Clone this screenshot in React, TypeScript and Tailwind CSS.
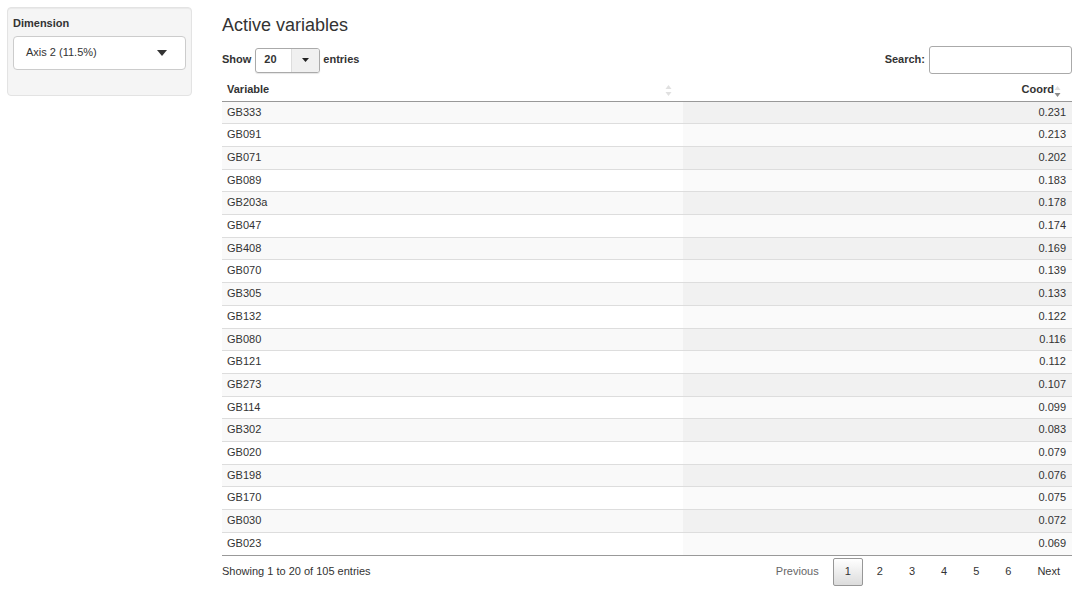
import React from "react";

const rows: [string, string][] = [
  ["GB333", "0.231"],
  ["GB091", "0.213"],
  ["GB071", "0.202"],
  ["GB089", "0.183"],
  ["GB203a", "0.178"],
  ["GB047", "0.174"],
  ["GB408", "0.169"],
  ["GB070", "0.139"],
  ["GB305", "0.133"],
  ["GB132", "0.122"],
  ["GB080", "0.116"],
  ["GB121", "0.112"],
  ["GB273", "0.107"],
  ["GB114", "0.099"],
  ["GB302", "0.083"],
  ["GB020", "0.079"],
  ["GB198", "0.076"],
  ["GB170", "0.075"],
  ["GB030", "0.072"],
  ["GB023", "0.069"],
];

function SortIcon({ active }: { active?: boolean }) {
  return (
    <svg width="7" height="13" viewBox="0 0 7 13" className="absolute right-[1px] top-[4px]">
      <path d="M3.5 1 L6.5 5 L0.5 5 Z" fill="#e0e0e0" />
      <path d="M3.5 12 L6.5 8 L0.5 8 Z" fill={active ? "#8a8a8a" : "#e0e0e0"} />
    </svg>
  );
}

export default function App() {
  return (
    <div className="flex w-[1080px] h-[596px] bg-white font-['Liberation_Sans',Arial,sans-serif] text-[#333] text-[11px] leading-[1.42857]">
      {/* Sidebar */}
      <div className="ml-[7px] mt-[7px] w-[185px] h-[89px] shrink-0 bg-[#f5f5f5] border border-[#e3e3e3] rounded-[4px] px-[5px] pt-[8px] shadow-[inset_0_1px_1px_rgba(0,0,0,0.05)]">
        <div className="font-bold">Dimension</div>
        <div className="mt-[4px] h-[34px] bg-white border border-[#ccc] rounded-[4px] flex items-center justify-between pl-[12px] pr-[18px]">
          <span className="pt-[1px]">Axis 2 (11.5%)</span>
          <svg width="10" height="6" viewBox="0 0 10 6">
            <path d="M0 0 L10 0 L5 6 Z" fill="#333" />
          </svg>
        </div>
      </div>

      {/* Main */}
      <div className="ml-[30px] w-[850px] shrink-0">
        <h3 className="mt-[15px] text-[18px] leading-[20px] font-normal text-[#333]">Active variables</h3>

        <div className="mt-[11px] h-[28px] flex items-center justify-between">
          <div className="flex items-center font-bold">
            <span>Show</span>
            <div className="ml-[4px] h-[25px] w-[65px] border border-[#aaa] rounded-[3px] flex overflow-hidden shadow-[0_1px_1px_rgba(0,0,0,0.1)]">
              <span className="flex-1 flex items-center pl-[8px] font-bold">20</span>
              <span className="w-[28px] bg-[#f0f0f0] border-l border-[#ddd] flex items-center justify-center">
                <svg width="7" height="4" viewBox="0 0 7 4">
                  <path d="M0 0 L7 0 L3.5 4 Z" fill="#222" />
                </svg>
              </span>
            </div>
            <span className="ml-[3px]">entries</span>
          </div>
          <div className="flex items-center font-bold">
            <span>Search:</span>
            <div className="ml-[4px] w-[143px] h-[28px] border border-[#aaa] rounded-[3px] bg-white" />
          </div>
        </div>

        <table className="mt-[6px] w-[850px] border-collapse table-fixed">
          <thead>
            <tr className="border-b border-[#999]">
              <th className="w-[461px] relative text-left font-bold py-[2px] pl-[5px] pr-[18px] h-[21px]">
                Variable
                <span className="absolute right-[10px] top-0">
                  <SortIcon />
                </span>
              </th>
              <th className="relative text-right font-bold py-[2px] pl-[5px] pr-[18px] h-[21px]">
                Coord
                <span className="absolute right-[10px] top-[1px]">
                  <SortIcon active />
                </span>
              </th>
            </tr>
          </thead>
          <tbody>
            {rows.map(([v, c], i) => {
              const odd = i % 2 === 0;
              return (
                <tr key={v} className={i === 0 ? "" : "border-t border-[#ddd]"}>
                  <td className={`py-[3px] px-[5px] ${odd ? "bg-[#f9f9f9]" : "bg-white"}`}>{v}</td>
                  <td className={`py-[3px] pl-[5px] pr-[6px] text-right ${odd ? "bg-[#f1f1f1]" : "bg-[#fafafa]"}`}>{c}</td>
                </tr>
              );
            })}
          </tbody>
        </table>
        <div className="border-t border-[#999]" />

        <div className="flex justify-between items-start">
          <div className="pt-[8px]">Showing 1 to 20 of 105 entries</div>
          <div className="pt-[2px] flex items-center">
            <span className="px-[11px] py-[5.5px] border border-transparent text-[#666]">Previous</span>
            <span className="ml-[2px] px-[11px] py-[5.5px] border border-[#979797] rounded-[2px] bg-gradient-to-b from-white to-[#dcdcdc]">1</span>
            {["2", "3", "4", "5", "6"].map((p) => (
              <span key={p} className="ml-[2px] px-[11px] py-[5.5px] border border-transparent">{p}</span>
            ))}
            <span className="ml-[2px] px-[11px] py-[5.5px] border border-transparent">Next</span>
          </div>
        </div>
      </div>
    </div>
  );
}
